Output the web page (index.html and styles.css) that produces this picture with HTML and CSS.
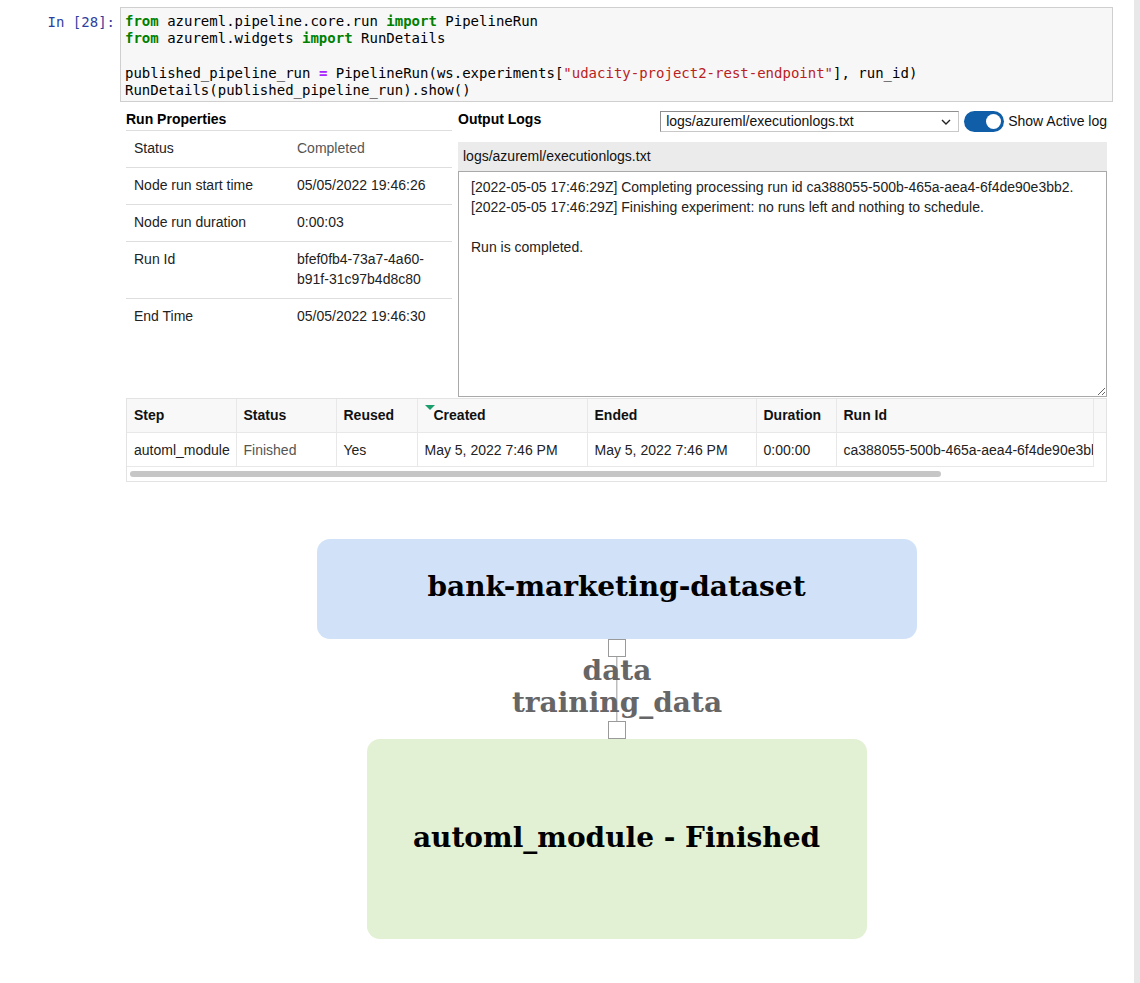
FILE: index.html
```html
<!DOCTYPE html>
<html>
<head>
<meta charset="utf-8">
<link rel="stylesheet" href="styles.css">
</head>
<body>
<div class="page">
  <main class="main">
    <div class="cell">
      <div class="prompt">In&nbsp;[28]:</div>
      <div class="input"><pre class="code"><span class="kw">from</span> azureml.pipeline.core.run <span class="kw">import</span> PipelineRun
<span class="kw">from</span> azureml.widgets <span class="kw">import</span> RunDetails

published_pipeline_run <span class="op">=</span> PipelineRun(ws.experiments[<span class="str">"udacity-project2-rest-endpoint"</span>], run_id)
RunDetails(published_pipeline_run).show()</pre></div>
    </div>

    <div class="output">
      <div class="widget">
        <div class="top">
          <section class="props">
            <div class="ptitle">Run Properties</div>
            <table class="ptable">
              <tr><td class="plabel">Status</td><td class="pvalue muted">Completed</td></tr>
              <tr><td class="plabel">Node run start time</td><td class="pvalue">05/05/2022 19:46:26</td></tr>
              <tr><td class="plabel">Node run duration</td><td class="pvalue">0:00:03</td></tr>
              <tr><td class="plabel">Run Id</td><td class="pvalue">bfef0fb4-73a7-4a60-b91f-31c97b4d8c80</td></tr>
              <tr class="last"><td class="plabel">End Time</td><td class="pvalue">05/05/2022 19:46:30</td></tr>
            </table>
          </section>
          <section class="logs">
            <div class="logbar">
              <div class="ltitle">Output Logs</div>
              <div class="select">
                <span class="seltext">logs/azureml/executionlogs.txt</span>
                <svg class="chev" width="10" height="6" viewBox="0 0 10 6"><path d="M1 1 L5 5 L9 1" fill="none" stroke="#222" stroke-width="1.4"/></svg>
              </div>
              <div class="toggle"><span class="knob"></span></div>
              <span class="toglabel">Show Active log</span>
            </div>
            <div class="loghead">logs/azureml/executionlogs.txt</div>
            <textarea class="logtext" readonly>[2022-05-05 17:46:29Z] Completing processing run id ca388055-500b-465a-aea4-6f4de90e3bb2.
[2022-05-05 17:46:29Z] Finishing experiment: no runs left and nothing to schedule.

Run is completed.</textarea>
          </section>
        </div>

        <div class="steps">
          <div class="stepsview">
            <table class="stable">
              <colgroup>
                <col class="c-step"><col class="c-status"><col class="c-reused"><col class="c-created"><col class="c-ended"><col class="c-dur"><col class="c-runid"><col class="c-extra">
              </colgroup>
              <thead>
                <tr>
                  <th>Step</th><th>Status</th><th>Reused</th><th><span class="sortmark"></span>Created</th><th>Ended</th><th>Duration</th><th>Run Id</th><th class="extra"></th>
                </tr>
              </thead>
              <tbody>
                <tr>
                  <td>automl_module</td><td class="muted">Finished</td><td>Yes</td><td>May 5, 2022 7:46 PM</td><td>May 5, 2022 7:46 PM</td><td>0:00:00</td><td class="clip">ca388055-500b-465a-aea4-6f4de90e3bb2</td><td class="extra"></td>
                </tr>
              </tbody>
            </table>
          </div>
          <div class="hscroll"><div class="thumb"></div></div>
        </div>
      </div>

      <div class="graph">
        <div class="node node-data">bank-marketing-dataset</div>
        <div class="port"></div>
        <div class="edge">
          <div class="elabel">data</div>
          <div class="elabel">training_data</div>
        </div>
        <div class="port"></div>
        <div class="node node-step">automl_module - Finished</div>
      </div>
    </div>
  </main>
  <div class="vscroll"></div>
</div>
</body>
</html>
```

FILE: styles.css
```css
html, body {
  margin: 0;
  padding: 0;
  background: #fff;
}
body {
  font-family: "Liberation Sans", Arial, sans-serif;
  font-size: 14px;
  color: #000;
}
.page {
  display: flex;
  min-height: 100vh;
}
.main {
  flex: 1;
  min-width: 0;
}
.vscroll {
  width: 6px;
  background: #e8e8e8;
}

/* code cell */
.cell {
  display: flex;
  padding-top: 7px;
}
.prompt {
  width: 115px;
  padding-right: 5px;
  text-align: right;
  font-family: "DejaVu Sans Mono", monospace;
  font-size: 14px;
  line-height: 17px;
  color: #303f9f;
  padding-top: 7px;
}
.input {
  width: 987px;
  border: 1px solid #cfcfcf;
  background: #f7f7f7;
  padding: 5px 0 2px 4px;
}
.code {
  margin: 0;
  font-family: "DejaVu Sans Mono", monospace;
  font-size: 14px;
  line-height: 17.25px;
  color: #000;
}
.kw { color: #008000; font-weight: bold; }
.op { color: #aa22ff; font-weight: bold; }
.str { color: #ba2121; }

/* output widget */
.output {
  margin-left: 126px;
  width: 981px;
  padding-top: 7px;
}
.top {
  display: flex;
  gap: 6px;
}
.props {
  width: 326px;
}
.ptitle, .ltitle {
  font-weight: bold;
  line-height: 20px;
}
.ptitle {
  padding-bottom: 1px;
  border-bottom: 1px solid #dedede;
}
.ptable {
  width: 100%;
  border-collapse: collapse;
  table-layout: fixed;
}
.ptable td {
  padding: 7px 8px 9px;
  line-height: 20px;
  vertical-align: top;
  border-bottom: 1px solid #dedede;
  color: #222;
}
.ptable tr.last td { border-bottom: none; }
.muted { color: #555 !important; }

.logs {
  flex: 1;
  display: flex;
  flex-direction: column;
}
.logbar {
  display: flex;
  align-items: flex-start;
  height: 33px;
}
.select {
  margin-left: auto;
  margin-top: 2px;
  height: 19px;
  border: 1px solid #8f8f8f;
  border-bottom-color: #c8c8c8;
  border-right-color: #c8c8c8;
  display: flex;
  align-items: center;
  justify-content: space-between;
  padding: 0 7px 0 5px;
  box-sizing: content-box;
  width: 285px;
  background: #fff;
}
.seltext {
  line-height: 19px;
  color: #111;
}
.toggle {
  margin-left: 5px;
  margin-top: 2px;
  width: 40px;
  height: 21px;
  border-radius: 11px;
  background: #0f5ea7;
  display: flex;
  align-items: center;
  justify-content: flex-end;
  padding-right: 3px;
  box-sizing: border-box;
}
.knob {
  width: 15px;
  height: 15px;
  border-radius: 50%;
  background: #fff;
}
.toglabel {
  margin-left: 4px;
  line-height: 20px;
  margin-top: 2px;
  color: #111;
}
.loghead {
  height: 29px;
  line-height: 29px;
  padding-left: 5px;
  background: #ebebeb;
  color: #111;
}
.logtext {
  display: block;
  box-sizing: border-box;
  width: 100%;
  height: 226px;
  margin: 0;
  border: 1px solid #a9a9a9;
  padding: 5px 12px;
  font-family: "Liberation Sans", Arial, sans-serif;
  font-size: 14px;
  line-height: 20px;
  color: #222;
  resize: vertical;
  outline: none;
}

/* steps table */
.steps {
  margin-top: 1px;
  border: 1px solid #e3e3e3;
}
.stepsview {
  overflow: hidden;
}
.stable {
  border-collapse: collapse;
  table-layout: fixed;
  width: 1150px;
}
.c-step { width: 109px; }
.c-status { width: 100px; }
.c-reused { width: 81px; }
.c-created { width: 170px; }
.c-ended { width: 169px; }
.c-dur { width: 80px; }
.c-runid { width: 257px; }
.c-extra { width: 184px; }
.stable th, .stable td {
  text-align: left;
  padding: 8px 7px;
  line-height: 17px;
  white-space: nowrap;
  border-right: 1px solid #e8e8e8;
  overflow: hidden;
}
.stable th {
  background: #f8f8f8;
  font-weight: bold;
  border-bottom: 1px solid #e8e8e8;
  color: #111;
}
.stable td {
  padding-top: 9px;
  padding-bottom: 7px;
  border-bottom: 1px solid #e8e8e8;
  color: #222;
}
.stable td.clip { text-overflow: clip; padding-right: 0; }
.stable td.extra { border-bottom: none; border-right: none; }
.stable th.extra { border-right: none; }
.sortmark {
  display: inline-block;
  vertical-align: top;
  margin-top: -2px;
  margin-right: -1px;
  width: 0;
  height: 0;
  border-left: 5px solid transparent;
  border-right: 5px solid transparent;
  border-top: 5px solid #1a9e6c;
}
.hscroll {
  height: 14px;
  padding: 4px 0 0 3px;
  box-sizing: border-box;
}
.thumb {
  width: 811px;
  height: 6px;
  border-radius: 3px;
  background: #c6c6c6;
}

/* graph */
.graph {
  margin-top: 57px;
  display: flex;
  flex-direction: column;
  align-items: center;
  font-family: "DejaVu Serif", serif;
  font-weight: bold;
}
.node {
  border-radius: 13px;
  display: flex;
  align-items: center;
  justify-content: center;
  font-size: 28px;
  color: #000;
  box-sizing: border-box;
}
.node-data {
  width: 600px;
  height: 100px;
  background: #d1e2f8;
  padding-bottom: 6px;
}
.node-step {
  width: 500px;
  height: 200px;
  background: #e2f0d3;
  padding-bottom: 4px;
}
.port {
  width: 18px;
  height: 18px;
  box-sizing: border-box;
  border: 1.5px solid #9a9a9a;
  background: #fff;
  margin-left: 1px;
}
.edge {
  height: 64px;
  width: 240px;
  margin-left: 1px;
  background: linear-gradient(#bdbdbd, #bdbdbd) center / 1.5px 100% no-repeat;
  display: flex;
  flex-direction: column;
  align-items: center;
}
.elabel {
  font-size: 28px;
  line-height: 32px;
  color: #666;
  margin-top: -2px;
  height: 34px;
}
.elabel + .elabel { margin-top: -2px; }
```
